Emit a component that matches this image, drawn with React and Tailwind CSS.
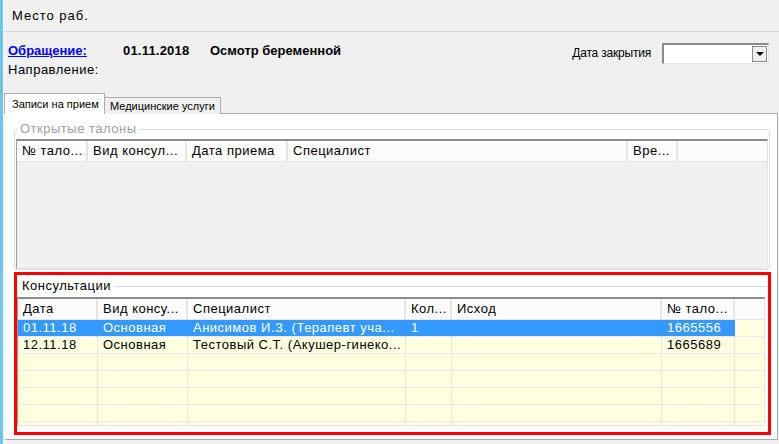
import React from 'react'

const list1Cols = [
  { w: 'w-[71px]', t: '№ тало...' },
  { w: 'w-[99px]', t: 'Вид консул...' },
  { w: 'w-[101px]', t: 'Дата приема' },
  { w: 'w-[340px]', t: 'Специалист' },
  { w: 'w-[50px]', t: 'Вре...' },
]

const list2Cols = [
  { w: 'w-[80px]', t: 'Дата' },
  { w: 'w-[90px]', t: 'Вид консу...' },
  { w: 'w-[218px]', t: 'Специалист' },
  { w: 'w-[46px]', t: 'Кол...' },
  { w: 'w-[210px]', t: 'Исход' },
  { w: 'w-[73px]', t: '№ тало...' },
]

const rows = [
  { sel: true, cells: ['01.11.18', 'Основная', 'Анисимов И.З. (Терапевт уча...', '1', '', '1665556'] },
  { sel: false, cells: ['12.11.18', 'Основная', 'Тестовый С.Т. (Акушер-гинеко...', '', '', '1665689'] },
  { sel: false, cells: ['', '', '', '', '', ''] },
  { sel: false, cells: ['', '', '', '', '', ''] },
  { sel: false, cells: ['', '', '', '', '', ''] },
  { sel: false, cells: ['', '', '', '', '', ''] },
  { sel: false, cells: ['', '', '', '', '', ''] },
]

function HeaderRow({ cols }) {
  return (
    <div className="h-[21px] shrink-0 flex bg-[#fcfcfc] border-b border-[#e5e5e5]">
      {cols.map((c, i) => (
        <div
          key={i}
          className={`${c.w} shrink-0 h-full flex items-center pl-[5px] border-r-2 border-[#e5e5e5] whitespace-nowrap overflow-hidden`}
        >
          {c.t}
        </div>
      ))}
      <div className="flex-1" />
    </div>
  )
}

export default function App() {
  return (
    <div className="w-[779px] h-[444px] flex bg-[#f0f0f0] text-black text-[13px] tracking-[0.5px] font-['Liberation_Sans',Arial,sans-serif] overflow-hidden">
      {/* left accent strip */}
      <div className="w-[3px] shrink-0 bg-[#6cc6ea]" />

      <div className="flex-1 flex flex-col border-l border-[#fafafa]">
        {/* top bar */}
        <div className="h-[32px] shrink-0 flex items-center pl-[8px] border-b border-[#cdd9e3] tracking-[1px]">
          Место раб.
        </div>

        {/* header info */}
        <div className="h-[61px] shrink-0 flex justify-between">
          <div className="pl-[4px] pt-[9px] leading-[19px]">
            <div className="flex">
              <span className="w-[115px] font-bold text-[#0000ff] underline tracking-normal">Обращение:</span>
              <span className="w-[87px] font-bold tracking-[0.2px]">01.11.2018</span>
              <span className="font-bold tracking-normal">Осмотр беременной</span>
            </div>
            <div>Направление:</div>
          </div>
          <div className="flex items-start pt-[11px] pr-[10px] gap-[11px]">
            <span className="leading-[21px] text-[12px] tracking-[-0.2px]">Дата закрытия</span>
            <div className="w-[107px] h-[21px] bg-white border-t-2 border-l-2 border-t-[#8a8a8a] border-l-[#8a8a8a] border-b border-r border-b-[#e3e3e3] border-r-[#e3e3e3] flex justify-end items-center pr-[1px]">
              <div className="w-[15px] h-[16px] bg-[#f0f0f0] border border-[#8a8a8a] flex items-center justify-center">
                <div className="w-0 h-0 border-l-[4px] border-r-[4px] border-t-[4px] border-l-transparent border-r-transparent border-t-black" />
              </div>
            </div>
          </div>
        </div>

        {/* tabs */}
        <div className="h-[21px] -mb-px shrink-0 flex items-end relative z-10 text-[11px] tracking-normal whitespace-nowrap">
          <div className="w-[101px] h-[21px] bg-white border-t border-l border-r border-[#adadad] flex items-center pl-[7px]">
            Записи на прием
          </div>
          <div className="w-[116px] h-[17px] bg-[#f0f0f0] border-t border-r border-[#adadad] flex items-center pl-[5px] pt-[1px]">
            Медицинские услуги
          </div>
        </div>

        {/* tab panel */}
        <div className="h-[327px] shrink-0 mr-[1px] bg-white border border-[#adadad] border-l-white flex flex-col pt-[7px]">
          {/* open tickets group */}
          <fieldset className="ml-[9px] mr-[7px] h-[149px] border border-[#d5dfe5] rounded-[3px]">
            <legend className="ml-[3px] px-[2px] leading-[16px] text-[#a0a0a0]">Открытые талоны</legend>
            <div className="mt-[2px] mx-[1px] h-[130px] flex flex-col border-t-2 border-l border-t-[#8c8c8c] border-l-[#a0a0a0] border-r border-b border-r-[#e3e3e3] border-b-[#e3e3e3] overflow-hidden">
              <HeaderRow cols={list1Cols} />
              <div className="flex-1 bg-[#f0f0f0]" />
            </div>
          </fieldset>

          {/* consultations, highlighted */}
          <div className="mt-[2px] ml-[9px] mr-[6px] h-[163px] border-[3px] border-[#ff0000] flex flex-col">
            <div className="h-[22px] shrink-0 flex items-center pl-[5px] gap-[3px]">
              <span>Консультации</span>
              <div className="flex-1 h-px bg-[#d5dfe5]" />
            </div>
            <div className="h-[129px] mr-[3px] flex flex-col border-t-2 border-l border-t-[#8c8c8c] border-l-[#a0a0a0] border-r border-b border-r-[#e3e3e3] border-b-[#e3e3e3] overflow-hidden">
              <HeaderRow cols={list2Cols} />
              <div className="flex-1 bg-[#ffffe0] overflow-hidden">
                {rows.map((r, ri) => (
                  <div key={ri} className="h-[17px] flex">
                    {list2Cols.map((c, ci) => (
                      <div
                        key={ci}
                        className={`${c.w} shrink-0 h-full flex items-center pl-[5px] whitespace-nowrap overflow-hidden border-r border-b ${r.sel ? 'bg-[#3399ff] text-white border-r-[#3399ff] border-b-[#e8e8e8]' : 'border-[#e8e8e8]'}`}
                      >
                        {r.cells[ci]}
                      </div>
                    ))}
                    <div className="flex-1 h-full border-b border-[#e8e8e8]" />
                  </div>
                ))}
              </div>
            </div>
          </div>
        </div>

        <div className="flex-1" />
      </div>
    </div>
  )
}
